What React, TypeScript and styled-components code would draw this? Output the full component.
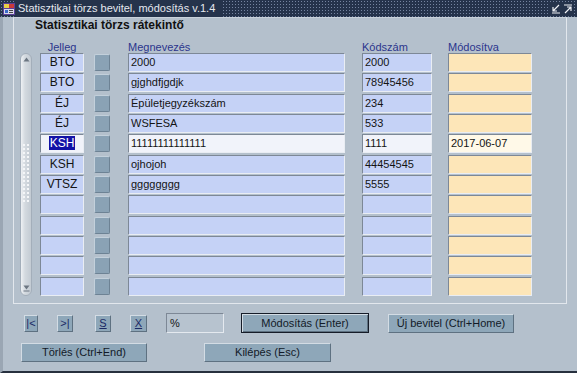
import React from "react";
import styled, { createGlobalStyle, css } from "styled-components";

const Global = createGlobalStyle`
  html, body { margin: 0; padding: 0; background: #b4c0cc; }
  body { font-family: "Liberation Sans", Arial, sans-serif; }
`;

const Window = styled.div`
  width: 577px;
  height: 373px;
  display: flex;
  flex-direction: column;
  overflow: hidden;
  background: #9ca6b2;
`;

const TitleBar = styled.div`
  height: 17px;
  flex: 0 0 17px;
  display: flex;
  align-items: center;
  background-color: #25334b;
  background-image: radial-gradient(circle, #7584a0 0.7px, transparent 1px);
  background-size: 3px 3px;
  padding: 0 5px 0 3px;
  box-sizing: border-box;
`;

const TitleIcon = styled.svg`
  flex: 0 0 12px;
  background: #25334b;
`;

const TitleText = styled.span`
  background: #25334b;
  color: #e4e8ef;
  font-size: 11px;
  line-height: 17px;
  padding: 0 6px 0 3px;
  white-space: nowrap;
`;

const TitleSpacer = styled.div`
  flex: 1;
`;

const WinButtons = styled.div`
  display: flex;
  gap: 4px;
  align-items: center;
  background: #25334b;
  padding-left: 4px;
`;

const Main = styled.div`
  flex: 1;
  background: #b4c0cc;
  border-left: 3px solid #9aa6b3;
  border-bottom: 2px solid #27303e;
  padding: 0 10px 0 10px;
  box-sizing: border-box;
  display: flex;
  flex-direction: column;
`;

const Frame = styled.div`
  height: 287px;
  box-sizing: border-box;
  border: 1px solid #e2e7ed;
  border-top-color: #c9d2db;
  display: flex;
  flex-direction: column;
`;

const Heading = styled.div`
  font-weight: bold;
  font-size: 12px;
  line-height: 14px;
  color: #111;
  padding-left: 21px;
`;

const HeaderRow = styled.div`
  display: flex;
  margin-top: 9px;
  padding-left: 26px;
  height: 12px;
`;

const HeaderLabel = styled.div<{ $w: number; $ml: number; $center?: boolean }>`
  width: ${(p) => p.$w}px;
  margin-left: ${(p) => p.$ml}px;
  font-size: 11px;
  line-height: 12px;
  color: #2b358c;
  text-align: ${(p) => (p.$center ? "center" : "left")};
  white-space: nowrap;
`;

const TableBody = styled.div`
  display: flex;
  gap: 8px;
  padding-left: 6px;
`;

const ScrollBar = styled.div`
  width: 12px;
  box-sizing: border-box;
  border-radius: 6px;
  border: 1px solid #a3aeba;
  background: linear-gradient(to right, #eef1f4 0%, #d3d9df 40%, #c3cbd3 100%);
  display: flex;
  flex-direction: column;
  align-items: center;
  padding: 3px 0 3px;
`;

const ScrollGap = styled.div`
  flex: 1;
`;

const Grip = styled.div`
  width: 8px;
  height: 60px;
  background-image: radial-gradient(circle, #f4f6f8 0.9px, transparent 1.2px);
  background-size: 4px 4px;
`;

const Rows = styled.div`
  display: flex;
  flex-direction: column;
  gap: 1.33px;
`;

const Row = styled.div`
  display: flex;
  align-items: center;
  height: 19px;
`;

type Tone = "blue" | "yellow" | "blueSel" | "yellowSel";

const toneBg: Record<Tone, string> = {
  blue: "#c5d2f6",
  yellow: "#fde6b8",
  blueSel: "#f1f3fa",
  yellowSel: "#fff9e8",
};

const Field = styled.div<{ $w: number; $ml: number; $tone: Tone; $center?: boolean }>`
  width: ${(p) => p.$w}px;
  margin-left: ${(p) => p.$ml}px;
  height: 19px;
  box-sizing: border-box;
  background: ${(p) => toneBg[p.$tone]};
  border: 1px solid;
  border-color: #7d8896 #e9edf3 #e9edf3 #7d8896;
  font-size: ${(p) => (p.$center ? 12 : 11)}px;
  line-height: 17px;
  color: #141414;
  padding-left: 2px;
  white-space: nowrap;
  overflow: hidden;
  ${(p) =>
    p.$center &&
    css`
      text-align: center;
      padding-left: 0;
    `}
`;

const Selected = styled.span`
  background: #1212a6;
  color: #ffffff;
  padding: 0 1px;
`;

const RowButton = styled.div<{ $ml: number }>`
  width: 16px;
  height: 17px;
  margin-left: ${(p) => p.$ml}px;
  box-sizing: border-box;
  background: #8aa2b5;
  border: 1px solid;
  border-color: #c3d0db #6d8294 #6d8294 #c3d0db;
  border-radius: 2px;
`;

const Controls = styled.div`
  display: flex;
  flex-direction: column;
  gap: 9px;
  padding-top: 9px;
`;

const ToolRow = styled.div`
  display: flex;
  align-items: center;
  height: 20px;
`;

const Button = styled.div<{ $w: number; $ml: number; $h?: number; $default?: boolean }>`
  width: ${(p) => p.$w}px;
  height: ${(p) => p.$h ?? 19}px;
  margin-left: ${(p) => p.$ml}px;
  box-sizing: border-box;
  background: #8ea7b9;
  border: 1px solid;
  border-color: #d3dce4 #5e7181 #5e7181 #d3dce4;
  color: #121a28;
  font-size: 11px;
  display: flex;
  align-items: center;
  justify-content: center;
  white-space: nowrap;
  ${(p) =>
    p.$default &&
    css`
      border: 1px solid #151c28;
      box-shadow: inset 1px 1px 0 #d3dce4, inset -1px -1px 0 #5e7181;
    `}
`;

const NavButton = styled(Button)`
  font-size: 11px;
  color: #1b2a66;
`;

const Under = styled.span`
  text-decoration: underline;
`;

const FindField = styled.div<{ $w: number; $ml: number }>`
  width: ${(p) => p.$w}px;
  margin-left: ${(p) => p.$ml}px;
  height: 20px;
  box-sizing: border-box;
  border: 1px solid;
  border-color: #7d8896 #e4e9ef #e4e9ef #7d8896;
  background: #b7c3cf;
  font-size: 11px;
  line-height: 18px;
  padding-left: 3px;
  color: #141414;
`;

type RowData = { j: string; m: string; k: string; d: string; sel?: boolean };

const data: RowData[] = [
  { j: "BTO", m: "2000", k: "2000", d: "" },
  { j: "BTO", m: "gjghdfjgdjk", k: "78945456", d: "" },
  { j: "ÉJ", m: "Épületjegyzékszám", k: "234", d: "" },
  { j: "ÉJ", m: "WSFESA", k: "533", d: "" },
  { j: "KSH", m: "11111111111111", k: "1111", d: "2017-06-07", sel: true },
  { j: "KSH", m: "ojhojoh", k: "44454545", d: "" },
  { j: "VTSZ", m: "gggggggg", k: "5555", d: "" },
  { j: "", m: "", k: "", d: "" },
  { j: "", m: "", k: "", d: "" },
  { j: "", m: "", k: "", d: "" },
  { j: "", m: "", k: "", d: "" },
  { j: "", m: "", k: "", d: "" },
];

export default function App() {
  return (
    <>
      <Global />
      <Window>
        <TitleBar>
          <TitleIcon width="12" height="12" viewBox="0 0 12 12">
            <rect x="0" y="0" width="12" height="12" fill="#5a3f9a" />
            <rect x="1" y="1" width="5" height="4" fill="#e8d048" />
            <rect x="6" y="1" width="5" height="4" fill="#c83a3a" />
            <rect x="1" y="6" width="10" height="5" fill="#d8d8e8" />
            <rect x="2" y="7" width="3" height="3" fill="#3a6ac8" />
            <rect x="6" y="7" width="4" height="1" fill="#444" />
            <rect x="6" y="9" width="4" height="1" fill="#444" />
          </TitleIcon>
          <TitleText>Statisztikai törzs bevitel, módosítás v.1.4</TitleText>
          <TitleSpacer />
          <WinButtons>
            <svg width="8" height="10" viewBox="0 0 8 10">
              <path d="M7 1 L1.5 6.5 M1 3 V7 H5 M0 9 H8" stroke="#f0f2f6" strokeWidth="1.2" fill="none" />
            </svg>
            <svg width="8" height="10" viewBox="0 0 8 10">
              <path d="M0 1 H8 M1 9 L6.5 3.5 M3 3 H7 V7" stroke="#f0f2f6" strokeWidth="1.2" fill="none" />
            </svg>
          </WinButtons>
        </TitleBar>
        <Main>
          <Frame>
            <Heading>Statisztikai törzs rátekintő</Heading>
            <HeaderRow>
              <HeaderLabel $w={44} $ml={0} $center>
                Jelleg
              </HeaderLabel>
              <HeaderLabel $w={217} $ml={44}>
                Megnevezés
              </HeaderLabel>
              <HeaderLabel $w={70} $ml={17}>
                Kódszám
              </HeaderLabel>
              <HeaderLabel $w={84} $ml={16}>
                Módosítva
              </HeaderLabel>
            </HeaderRow>
            <TableBody>
              <ScrollBar>
                <svg width="7" height="5" viewBox="0 0 7 5">
                  <path d="M3.5 0.5 L6.5 4.5 H0.5 Z" fill="#6c7682" />
                </svg>
                <ScrollGap />
                <Grip />
                <ScrollGap />
                <svg width="7" height="7" viewBox="0 0 7 7">
                  <path d="M0.5 0.5 H6.5 L3.5 4.5 Z" fill="#6c7682" />
                  <rect x="0.5" y="5.5" width="6" height="1" fill="#6c7682" />
                </svg>
              </ScrollBar>
              <Rows>
                {data.map((r, i) => (
                  <Row key={i}>
                    <Field $w={44} $ml={0} $tone={r.sel ? "blueSel" : "blue"} $center>
                      {r.sel ? <Selected>{r.j}</Selected> : r.j}
                    </Field>
                    <RowButton $ml={10} />
                    <Field $w={217} $ml={18} $tone={r.sel ? "blueSel" : "blue"}>
                      {r.m}
                    </Field>
                    <Field $w={70} $ml={17} $tone={r.sel ? "blueSel" : "blue"}>
                      {r.k}
                    </Field>
                    <Field $w={84} $ml={16} $tone={r.sel ? "yellowSel" : "yellow"}>
                      {r.d}
                    </Field>
                  </Row>
                ))}
              </Rows>
            </TableBody>
          </Frame>
          <Controls>
            <ToolRow>
              <NavButton $w={14} $h={17} $ml={11}>|&lt;</NavButton>
              <NavButton $w={16} $h={17} $ml={19}>&gt;|</NavButton>
              <NavButton $w={16} $h={17} $ml={22}>
                <Under>S</Under>
              </NavButton>
              <NavButton $w={17} $h={17} $ml={19}>
                <Under>X</Under>
              </NavButton>
              <FindField $w={58} $ml={19}>%</FindField>
              <Button $w={128} $h={20} $ml={17} $default>
                Módosítás (Enter)
              </Button>
              <Button $w={126} $ml={19}>
                Új bevitel (Ctrl+Home)
              </Button>
            </ToolRow>
            <ToolRow>
              <Button $w={126} $ml={8}>
                Törlés (Ctrl+End)
              </Button>
              <Button $w={127} $ml={57}>
                Kilépés (Esc)
              </Button>
            </ToolRow>
          </Controls>
        </Main>
      </Window>
    </>
  );
}
